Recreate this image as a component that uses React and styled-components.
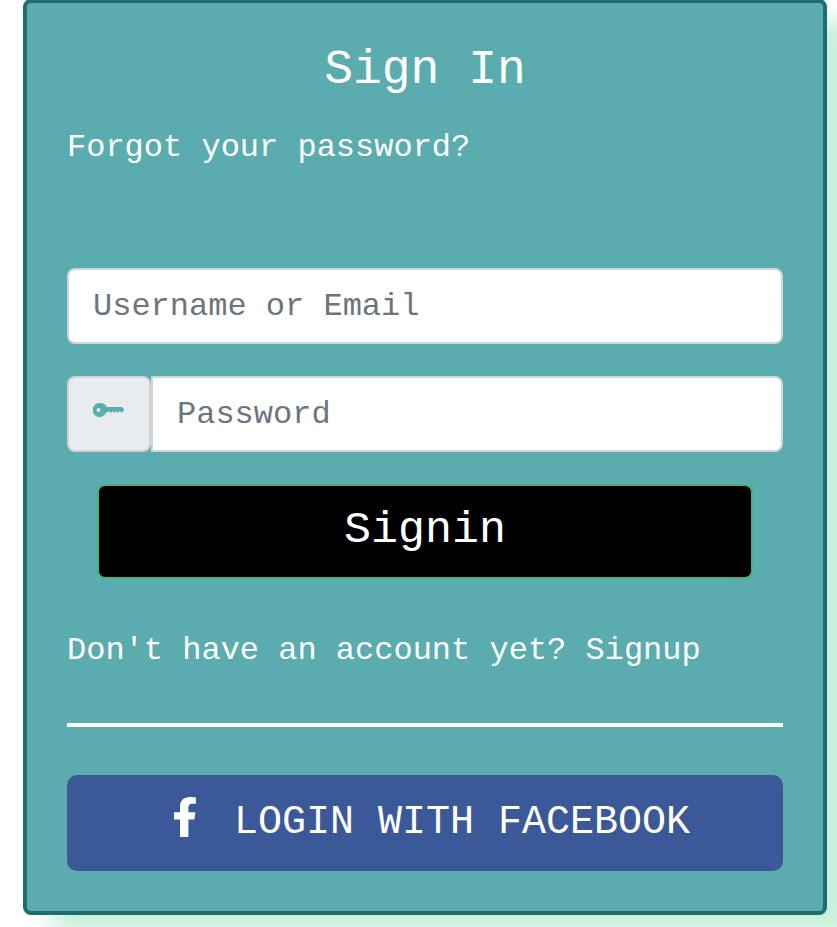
import React from "react";
import styled, { createGlobalStyle } from "styled-components";

const Global = createGlobalStyle`
  *, *::before, *::after { box-sizing: border-box; }
  html, body { margin: 0; height: 927px; overflow: hidden; background: #fff; }
  body, input, button { font-family: "Liberation Mono", monospace; }
`;
const Card = styled.main`
  display: flex;
  flex-direction: column;
  width: 804px;
  height: 916px;
  margin: -1px 0 0 23px;
  padding: 38px 40px 40px;
  border: 4px solid #1c6e70;
  border-radius: 8px;
  background: #5aacae;
  color: #fff;
  box-shadow: 28px 20px 26px #c6f0da;
`;
const Title = styled.h1`
  margin: 0 0 25px;
  font-size: 48px;
  font-weight: 400;
  line-height: 58px;
  text-align: center;
`;
const TextLine = styled.p`
  margin: 0;
  font-size: 32px;
  line-height: 48px;
`;
const Form = styled.form`
  display: flex;
  flex-direction: column;
  gap: 32px;
  margin: 96px 0 48px;
`;
const Group = styled.div`
  display: flex;
  height: 76px;
`;
const Addon = styled.span`
  display: flex;
  align-items: center;
  width: 84px;
  padding: 0 0 8px 24px;
  border: 2px solid #ced4da;
  border-radius: 8px;
  background: #e9ecef;
  color: #5aacae;
`;
const Input = styled.input`
  flex: 1;
  min-width: 0;
  padding: 0 24px;
  border: 2px solid #ced4da;
  border-radius: ${(p) => (p.$joined ? "0 8px 8px 0" : "8px")};
  font-size: 32px;
  outline: none;
  &::placeholder { color: #6c757d; opacity: 1; }
`;
const Submit = styled.button`
  height: 95px;
  margin: 0 30px;
  padding: 0 0 2px;
  border: 2px solid #48b082;
  border-radius: 8px;
  background: #000;
  color: #fff;
  font-size: 45px;
`;
const Divider = styled.hr`
  width: 100%;
  height: 4px;
  margin: 48px 0;
  border: 0;
  background: #fff;
`;
const Facebook = styled.button`
  display: flex;
  align-items: center;
  height: 96px;
  padding: 0 0 2px 106px;
  border: 0;
  border-radius: 10px;
  background: #3b5998;
  color: #fff;
  font-size: 40px;
`;
const FacebookMark = styled.svg`
  width: 24px;
  height: 40px;
  margin: 0 37px 10px 0;
  fill: currentColor;
`;

export default function App() {
  return (
    <>
      <Global />
      <Card>
        <Title>Sign In</Title>
        <TextLine>Forgot your password?</TextLine>
        <Form>
          <Group><Input placeholder="Username or Email" /></Group>
          <Group>
            <Addon>
              <svg width="32" height="16" viewBox="0 0 32 16" fill="currentColor">
                <path fillRule="evenodd" d="M7.500 1a7 7 0 0 1 6.300 4H29l2.500 2.700L28.500 10.800l-1.800-1.800-1.700 2-1.800-2-1.800 2-1.800-2-1.800 2-1.800-2-1.700 1.500h-1.200A7 7 0 1 1 7.500 1M5.500 6a2 2 0 1 0 0 4 2 2 0 0 0 0-4" />
              </svg>
            </Addon>
            <Input $joined type="password" placeholder="Password" />
          </Group>
          <Submit type="button">Signin</Submit>
        </Form>
        <TextLine>Don't have an account yet? Signup</TextLine>
        <Divider />
        <Facebook type="button">
          <FacebookMark viewBox="0 0 24 40">
            <path d="M7 40V22.500H1V15.300h6V9.600C7 3.500 10.800 0 17 0c2.700 0 5.900.500 5.900.500v6.300h-3.300c-3.200 0-4.200 2-4.200 4v4.500h7l-1.100 7.200h-5.900V40z" />
          </FacebookMark>
          LOGIN WITH FACEBOOK
        </Facebook>
      </Card>
    </>
  );
}
